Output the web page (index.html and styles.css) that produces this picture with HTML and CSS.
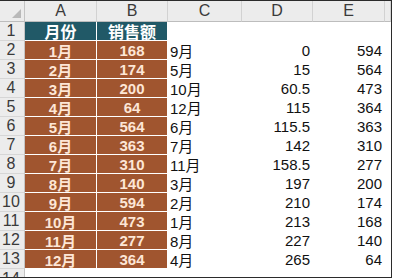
FILE: index.html
```html
<!DOCTYPE html>
<html lang="zh-CN">
<head>
    <meta charset="UTF-8">
    <title>销售额</title>
    <link rel="stylesheet" href="styles.css">
</head>
<body>
<div class="sheet">
    <!-- 列标题 -->
    <div class="corner"><span class="select-all"></span></div>
    <div class="col-head">A</div>
    <div class="col-head">B</div>
    <div class="col-head">C</div>
    <div class="col-head">D</div>
    <div class="col-head">E</div>
    <div class="col-head"></div>

    <!-- 第1行：表头 -->
    <div class="row-head">1</div>
    <div class="cell title">月份</div>
    <div class="cell title">销售额</div>
    <div class="cell"></div>
    <div class="cell"></div>
    <div class="cell"></div>
    <div class="cell"></div>

    <div class="row-head">2</div>
    <div class="cell data">1月</div>
    <div class="cell data">168</div>
    <div class="cell txt">9月</div>
    <div class="cell num">0</div>
    <div class="cell num">594</div>
    <div class="cell"></div>

    <div class="row-head">3</div>
    <div class="cell data">2月</div>
    <div class="cell data">174</div>
    <div class="cell txt">5月</div>
    <div class="cell num">15</div>
    <div class="cell num">564</div>
    <div class="cell"></div>

    <div class="row-head">4</div>
    <div class="cell data">3月</div>
    <div class="cell data">200</div>
    <div class="cell txt">10月</div>
    <div class="cell num">60.5</div>
    <div class="cell num">473</div>
    <div class="cell"></div>

    <div class="row-head">5</div>
    <div class="cell data">4月</div>
    <div class="cell data">64</div>
    <div class="cell txt">12月</div>
    <div class="cell num">115</div>
    <div class="cell num">364</div>
    <div class="cell"></div>

    <div class="row-head">6</div>
    <div class="cell data">5月</div>
    <div class="cell data">564</div>
    <div class="cell txt">6月</div>
    <div class="cell num">115.5</div>
    <div class="cell num">363</div>
    <div class="cell"></div>

    <div class="row-head">7</div>
    <div class="cell data">6月</div>
    <div class="cell data">363</div>
    <div class="cell txt">7月</div>
    <div class="cell num">142</div>
    <div class="cell num">310</div>
    <div class="cell"></div>

    <div class="row-head">8</div>
    <div class="cell data">7月</div>
    <div class="cell data">310</div>
    <div class="cell txt">11月</div>
    <div class="cell num">158.5</div>
    <div class="cell num">277</div>
    <div class="cell"></div>

    <div class="row-head">9</div>
    <div class="cell data">8月</div>
    <div class="cell data">140</div>
    <div class="cell txt">3月</div>
    <div class="cell num">197</div>
    <div class="cell num">200</div>
    <div class="cell"></div>

    <div class="row-head">10</div>
    <div class="cell data">9月</div>
    <div class="cell data">594</div>
    <div class="cell txt">2月</div>
    <div class="cell num">210</div>
    <div class="cell num">174</div>
    <div class="cell"></div>

    <div class="row-head">11</div>
    <div class="cell data">10月</div>
    <div class="cell data">473</div>
    <div class="cell txt">1月</div>
    <div class="cell num">213</div>
    <div class="cell num">168</div>
    <div class="cell"></div>

    <div class="row-head">12</div>
    <div class="cell data">11月</div>
    <div class="cell data">277</div>
    <div class="cell txt">8月</div>
    <div class="cell num">227</div>
    <div class="cell num">140</div>
    <div class="cell"></div>

    <div class="row-head">13</div>
    <div class="cell data">12月</div>
    <div class="cell data">364</div>
    <div class="cell txt">4月</div>
    <div class="cell num">265</div>
    <div class="cell num">64</div>
    <div class="cell"></div>

    <!-- 第14行只露出一截 -->
    <div class="row-head last">14</div>
    <div class="cell"></div>
    <div class="cell"></div>
    <div class="cell"></div>
    <div class="cell"></div>
    <div class="cell"></div>
    <div class="cell"></div>
</div>
</body>
</html>
```

FILE: styles.css
```css
* {
    margin: 0;
    padding: 0;
    box-sizing: border-box;
}

body {
    width: 396px;
    height: 279px;
    background: #fff;
    font-family: 'Liberation Sans', 'Noto Sans CJK SC', sans-serif;
    overflow: hidden;
}

/* 表格区域 */
.sheet {
    width: 392px;
    height: 278px;
    display: grid;
    grid-template-columns: 25px 72px 71px 74px 71px 72px 1fr;
    grid-template-rows: 21px repeat(13, 19px) 1fr;
    border: 1px solid #2b2b2b;
    border-left: none;
    overflow: hidden;
}

/* 左上角全选 */
.corner {
    position: relative;
    background: #ececec;
    border-right: 1px solid #c4c4c4;
    border-bottom: 1px solid #bdbdbd;
}

.select-all {
    position: absolute;
    right: 3px;
    bottom: 3px;
    width: 0;
    height: 0;
    border-left: 9px solid transparent;
    border-bottom: 9px solid #b9b9b9;
}

.col-head {
    background: #ececec;
    border-right: 1px solid #d2d2d2;
    border-bottom: 1px solid #bdbdbd;
    color: #3a3a3a;
    font-size: 16px;
    display: flex;
    align-items: center;
    justify-content: center;
}

.row-head {
    background: #ececec;
    border-right: 1px solid #c4c4c4;
    border-bottom: 1px solid #d6d6d6;
    color: #3a3a3a;
    font-size: 16px;
    display: flex;
    align-items: center;
    justify-content: center;
    padding-right: 2px;
    overflow: hidden;
}

.row-head.last {
    align-items: flex-start;
    padding-top: 1px;
    border-bottom: none;
}

.cell {
    display: flex;
    align-items: center;
    font-size: 15px;
    color: #111;
    white-space: nowrap;
    overflow: hidden;
}

/* 月份 / 销售额 两列 */
.title {
    justify-content: center;
    background: #215967;
    color: #fff;
    font-size: 16px;
    font-weight: bold;
    border-right: 1px solid #fff;
    border-bottom: 1px solid #fff;
}

.data {
    justify-content: center;
    background: #a0552f;
    color: #fde6d6;
    font-weight: bold;
    border-right: 1px solid #fff;
    border-bottom: 1px solid #fff;
}

.txt {
    padding-left: 2px;
}

.num {
    justify-content: flex-end;
    padding-right: 3px;
}
```
